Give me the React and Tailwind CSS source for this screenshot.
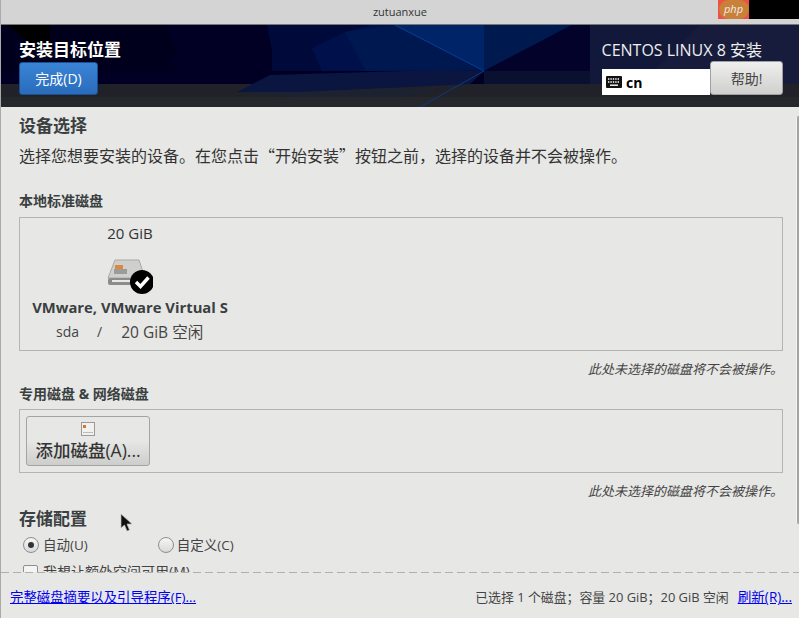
const FONT = "font-['Open_Sans','Noto_Sans_CJK_SC',sans-serif]";
const NOTE = "mt-[9px] text-right text-[13px] leading-[18px] italic text-[#444]";
const SUBHEAD = "text-[14px] leading-[16px] font-bold text-[#3a3f41]";

// backdrop of the header, in page coordinates
const HeaderArt = () => (
  <svg className="absolute inset-0 w-full h-full" viewBox="1 25 798 82" preserveAspectRatio="none">
    <rect x="0" y="25" width="799" height="82" fill="#010024" />
    <polygon points="0,25 165,25 177,52 170,60 176,71 0,71" fill="#00001c" />
    <polygon points="8,25 50,25 50,60" fill="#000" />
    <polygon points="267,25 400,25 440,71 272,71 272,50" fill="#000a3a" />
    <polygon points="312,48 345,32 372,25 395,25 484,71 322,71" fill="#00104a" />
    <polygon points="345,32 395,25 480,70 366,71" fill="#001850" />
    <polygon points="395,25 484,25 484,71" fill="#002468" />
    <polygon points="484,25 572,25 484,71" fill="#001a50" />
    <polygon points="484,71 572,25 590,25 590,71" fill="#02022a" />
    <rect x="484" y="71" width="106" height="14" fill="#0a1030" />
    <rect x="590" y="25" width="209" height="60" fill="#12183a" />
    <polygon points="700,25 799,25 799,85 640,85" fill="#171c3c" />
    <rect x="0" y="84" width="799" height="23" fill="#202129" />
    <polygon points="237,92 270,75 440,70 484,71 470,84 390,88 300,92" fill="#0a1640" />
    <polygon points="237,92 300,92 390,88 440,90 400,98 300,98" fill="#1c2230" />
    <rect x="0" y="97" width="799" height="10" fill="#25272c" />
    <path d="M484 71 L420 107" stroke="#0a3a80" strokeWidth="1" />
    <path d="M395 25 L484 71" stroke="#0a3f96" strokeWidth="1" />
  </svg>
);

const DiskIcon = () => (
  <svg width="46" height="36" viewBox="0 0 46 36">
    <polygon points="8,2 32,2 38,20 1,20" fill="#cfcfcd" stroke="#a8a8a8" strokeWidth="1" />
    <rect x="8" y="7" width="8" height="4" fill="#d98a3c" />
    <rect x="7" y="11" width="13" height="5" fill="#9b9b9b" />
    <rect x="1" y="20" width="37" height="7" rx="2" fill="#8c8c8c" />
    <rect x="5" y="22" width="28" height="2" fill="#e8e8e8" />
    <circle cx="35" cy="24" r="12" fill="#000" />
    <path d="M29 24 L33.5 28.5 L41.5 19.5" fill="none" stroke="#fff" strokeWidth="3.4" />
  </svg>
);

const Radio = ({ checked }) => (
  <span className="w-[16px] h-[16px] rounded-full border border-[#8e8e8e] bg-gradient-to-b from-[#f6f6f6] to-[#d9d9d9] flex items-center justify-center">
    {checked && <span className="w-[6px] h-[6px] rounded-full bg-[#2e3436]" />}
  </span>
);

const App = () => {
  return (
    <div className={`${FONT} relative w-[799px] h-[618px] overflow-hidden flex flex-col bg-[#e7e7e5] text-[#2e3436] border-l border-[#aaa]`}>
      <div className="h-[25px] shrink-0 bg-[#d4d4d4] flex items-center justify-center text-[11px] text-[#333] border-b border-[#777]">
        zutuanxue
      </div>

      <div className="relative h-[82px] shrink-0 flex justify-between px-[18px] pt-[14px]">
        <HeaderArt />
        <div className="relative flex flex-col items-start">
          <div className="text-[17px] leading-[22px] font-bold text-white">安装目标位置</div>
          <button className="mt-[1px] w-[79px] h-[33px] rounded-[3px] border border-[#1c4f8f] bg-gradient-to-b from-[#3a84d6] to-[#2a6cbc] text-white text-[14px]">
            完成(D)
          </button>
        </div>
        <div className="relative flex flex-col items-end -mr-[2px]">
          <div className="text-[16px] leading-[22px] text-[#eeeeec] mr-[21px]">CENTOS LINUX 8 安装</div>
          <div className="flex items-start">
            <div className="mt-[8px] w-[108px] h-[26px] bg-white flex items-center pl-[4px] gap-[4px] text-[14px] font-bold text-black">
              <svg width="16" height="12" viewBox="0 0 16 12">
                <rect width="16" height="12" rx="1" fill="#111" />
                <path d="M2 3h12M2 6h12" stroke="#fff" strokeWidth="1.4" strokeDasharray="1.4 1" />
                <path d="M4 9.2h8" stroke="#fff" strokeWidth="1.4" />
              </svg>
              cn
            </div>
            <button className="w-[73px] h-[34px] rounded-[3px] border border-[#a0a0a0] bg-gradient-to-b from-[#efefed] to-[#cfcfcd] text-[14px] text-[#444]">
              帮助!
            </button>
          </div>
        </div>
      </div>

      <div className="flex-1 min-h-0 overflow-hidden pl-[18px] pr-[16px] pt-[9px]">
        <div className="text-[17px] leading-[20px] font-bold text-[#3a3f41]">设备选择</div>
        <div className="mt-[9px] text-[16px] leading-[20px] text-[#333] font-['Noto_Sans_CJK_SC',sans-serif]">
          选择您想要安装的设备。在您点击“开始安装”按钮之前，选择的设备并不会被操作。
        </div>

        <div className={`mt-[28px] ${SUBHEAD}`}>本地标准磁盘</div>
        <div className="mt-[8px] h-[134px] border border-[#b4b4b2] pl-[12px]">
          <div className="w-[196px] flex flex-col items-center">
            <div className="mt-[5px] text-[15px] leading-[20px]">20 GiB</div>
            <div className="mt-[15px] h-[36px]">
              <DiskIcon />
            </div>
            <div className="mt-[3px] text-[14.8px] leading-[20px] font-bold whitespace-nowrap text-[#3a3f41]">VMware, VMware Virtual S</div>
            <div className="mt-[5px] w-full flex items-center text-[14px] leading-[20px] text-[#444] whitespace-nowrap">
              <span className="ml-[24px]">sda</span>
              <span className="ml-[18px]">/</span>
              <span className="ml-[19px] text-[15.5px]">20 GiB 空闲</span>
            </div>
          </div>
        </div>
        <div className={NOTE}>此处未选择的磁盘将不会被操作。</div>

        <div className={`mt-[8px] ${SUBHEAD}`}>专用磁盘 &amp; 网络磁盘</div>
        <div className="mt-[7px] h-[64px] border border-[#b4b4b2] pl-[6px] pt-[6px]">
          <button className="w-[124px] h-[50px] rounded-[3px] border border-[#a4a4a4] bg-gradient-to-b from-[#e7e7e5] via-[#e7e7e5] to-[#cdcdcb] flex flex-col items-center">
            <svg className="mt-[5px]" width="14" height="14" viewBox="0 0 14 14">
              <rect x=".5" y=".5" width="13" height="13" fill="#f1f1ef" stroke="#9a9a9a" />
              <rect x="2" y="3" width="3" height="3" fill="#d9752c" />
              <rect x="2" y="10" width="10" height="1" fill="#bbb" />
            </svg>
            <span className="mt-[3px] text-[17.5px] leading-[22px] text-[#333] font-medium whitespace-nowrap">添加磁盘(A)...</span>
          </button>
        </div>
        <div className={NOTE}>此处未选择的磁盘将不会被操作。</div>

        <div className="mt-[9px] text-[17px] leading-[20px] font-bold text-[#3a3f41]">存储配置</div>
        <div className="mt-[6px] flex items-center text-[13.5px] leading-[20px] text-[#444] pl-[4px]">
          <Radio checked />
          <span className="ml-[4px]">自动(U)</span>
          <span className="ml-[70px] flex items-center">
            <Radio />
            <span className="ml-[3px]">自定义(C)</span>
          </span>
        </div>
        <div className="mt-[7px] flex items-center text-[14px] leading-[20px] text-[#444] pl-[4px]">
          <span className="w-[15px] h-[15px] rounded-[2px] border border-[#8e8e8e] bg-[#f4f4f4]" />
          <span className="ml-[5px]">我想让额外空间可用(M)</span>
        </div>
      </div>

      <div className="h-px shrink-0 bg-[repeating-linear-gradient(90deg,#b0b0ae_0,#b0b0ae_8px,transparent_8px,transparent_12px)]" />
      <div className="h-[45px] shrink-0 flex items-center justify-between pl-[9px] pr-[7px] text-[12.9px] pt-[4px]">
        <a className="text-[13.4px] text-[#0000ee] underline">完整磁盘摘要以及引导程序(F)...</a>
        <div className="flex items-center text-[#444]">
          <span>已选择 1 个磁盘；容量 20 GiB；20 GiB 空闲</span>
          <a className="ml-[9px] text-[13.6px] text-[#0000ee] underline">刷新(R)...</a>
        </div>
      </div>

      {/* scrollbar thumb at the window edge */}
      <div className="absolute right-0 top-[116px] w-[3px] h-[408px] rounded-l-[2px] bg-[#a4a4a4] border-l border-[#f4f4f4]" />

      {/* watermark sitting on top of the window */}
      <div className="absolute top-0 left-[717px] w-[81px] h-[19px] bg-black flex">
        <div className="w-[31px] h-[19px] bg-[#f04f48] flex items-center justify-center">
          <span className="w-[30px] h-[19px] rounded-full bg-[#c98038] flex items-center justify-center text-[11px] italic text-[#eee]">php</span>
        </div>
      </div>

      {/* mouse pointer */}
      <svg className="absolute left-[119px] top-[513px]" width="13" height="20" viewBox="0 0 13 20">
        <path d="M1 1 L1 15 L4.5 12 L7 18 L9.5 17 L7 11 L12 11 Z" fill="#111" stroke="#bbb" strokeWidth=".7" />
      </svg>
    </div>
  );
};

export default App;
